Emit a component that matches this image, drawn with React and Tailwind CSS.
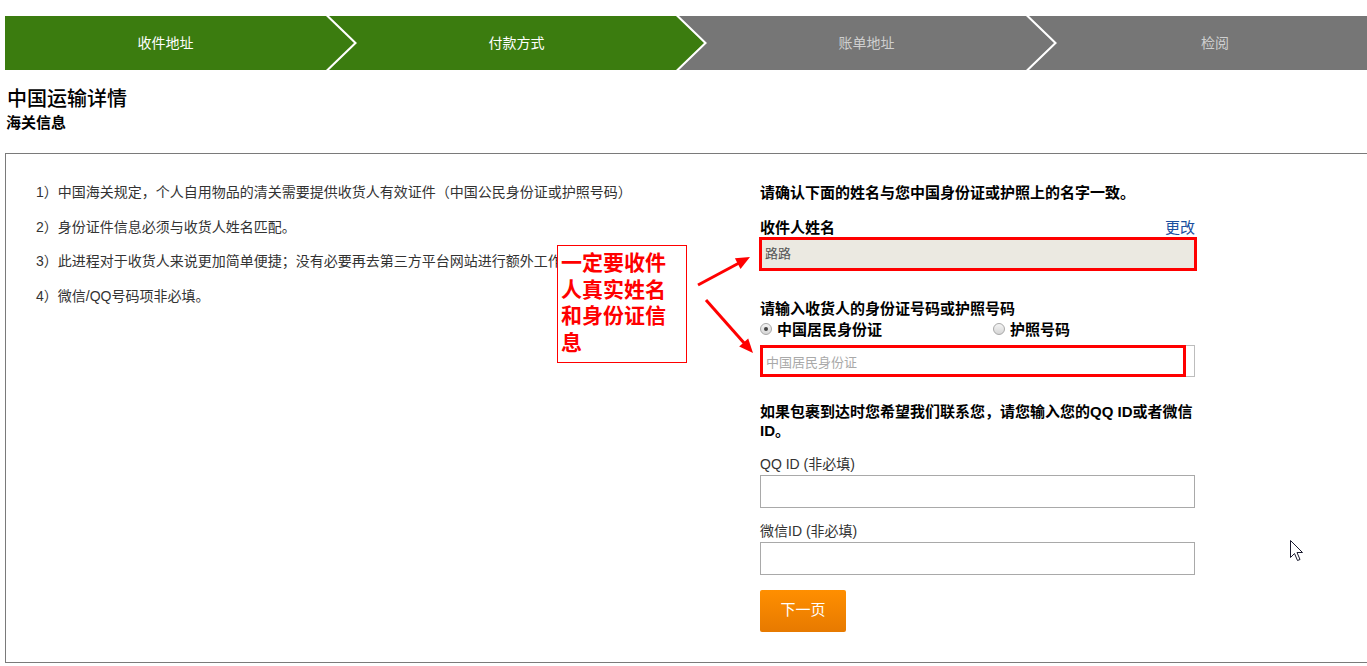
import React from "react";

const font = "font-['Liberation_Sans','Noto_Sans_CJK_SC',sans-serif]";

const steps = [
  { label: "收件地址", done: true },
  { label: "付款方式", done: true },
  { label: "账单地址", done: false },
  { label: "检阅", done: false },
];

const Stepper = () => (
  <div className="flex h-[54px] mt-[16px] -mr-[5px]">
    {steps.map((s, i) => {
      const first = i === 0;
      const last = i === steps.length - 1;
      const color = s.done ? "bg-[#3b7c0f] text-white" : "bg-[#767676] text-[#cfcfcf]";
      let shape = "";
      if (first) shape = "w-[349px] pr-[28px] [clip-path:polygon(0_0,calc(100%_-_28px)_0,100%_50%,calc(100%_-_28px)_100%,0_100%)]";
      else if (last) shape = "flex-1 -ml-[25px] pl-[34px] [clip-path:polygon(0_0,100%_0,100%_100%,0_100%,28px_50%)]";
      else shape = "w-[375px] -ml-[25px] px-[28px] [clip-path:polygon(0_0,calc(100%_-_28px)_0,100%_50%,calc(100%_-_28px)_100%,0_100%,28px_50%)]";
      return (
        <div key={s.label} className={`${color} ${shape} flex items-center justify-center text-[14px]`}>
          {s.label}
        </div>
      );
    })}
  </div>
);

const Radio = ({ checked, label }) => (
  <label className="flex items-center gap-[5px]">
    <span className="w-[12px] h-[12px] rounded-full border border-[#a8a8a8] bg-gradient-to-b from-[#f4f4f4] to-[#d6d6d6] flex items-center justify-center">
      {checked && <span className="w-[4px] h-[4px] rounded-full bg-[#444]" />}
    </span>
    <span className="font-bold text-[15px] text-black">{label}</span>
  </label>
);

export default function App() {
  return (
    <div className={`relative w-full h-[666px] overflow-hidden bg-white px-[5px] ${font}`}>
      <Stepper />

      <h1 className="ml-[2px] mt-[17px] text-[20px] leading-[24px] font-medium text-black">中国运输详情</h1>
      <h2 className="ml-[1px] mt-[3px] text-[15px] leading-[18px] font-bold text-black">海关信息</h2>

      {/* customs card */}
      <div className="mt-[21px] -mr-[5px] border-t border-b border-l border-[#7a7a7a] flex pt-[29px] pb-[30px]">
        <ul className="w-[754px] pl-[30px] flex flex-col gap-[15.5px] text-[14px] leading-[19px] text-[#333]">
          <li>1）中国海关规定，个人自用物品的清关需要提供收货人有效证件（中国公民身份证或护照号码）</li>
          <li>2）身份证件信息必须与收货人姓名匹配。</li>
          <li>3）此进程对于收货人来说更加简单便捷；没有必要再去第三方平台网站进行额外工作。</li>
          <li>4）微信/QQ号码项非必填。</li>
        </ul>

        <div className="w-[435px] flex flex-col">
          <p className="font-bold text-[15px] leading-[19px] text-black">请确认下面的姓名与您中国身份证或护照上的名字一致。</p>

          <div className="mt-[15.5px] flex items-end justify-between leading-[19px]">
            <span className="font-bold text-[15px] text-black">收件人姓名</span>
            <a className="text-[15px] text-[#1c4fa0]">更改</a>
          </div>
          <div className="-mx-[1px] h-[34px] w-[438px] border-[3px] border-[#ff0000] bg-[#ebe9e1] flex items-center px-[3px] text-[13px] text-[#555]">
            路路
          </div>

          <p className="mt-[28px] font-bold text-[15px] leading-[19px] text-black">请输入收货人的身份证号码或护照号码</p>
          <div className="mt-[2px] flex leading-[19px]">
            <div className="w-[233px]">
              <Radio checked label="中国居民身份证" />
            </div>
            <Radio label="护照号码" />
          </div>
          <div className="relative mt-[6px] h-[32px] border border-[#bdbdbd]">
            <div className="absolute -left-[1px] -top-[1px] right-[8px] -bottom-[1px] border-[3px] border-[#ff0000]" />
            <span className="absolute left-[5px] top-[7px] text-[13px] text-[#a9a9a9]">中国居民身份证</span>
          </div>

          <p className="mt-[25px] font-bold text-[15px] leading-[19px] text-black">
            如果包裹到达时您希望我们联系您，请您输入您的QQ ID或者微信
            <br />
            ID。
          </p>

          <label className="mt-[15px] text-[14px] leading-[19px] text-[#333]">QQ ID (非必填)</label>
          <div className="mt-[1px] h-[33px] border border-[#a9a9a9] bg-white" />

          <label className="mt-[14px] text-[14px] leading-[19px] text-[#333]">微信ID (非必填)</label>
          <div className="mt-[1px] h-[33px] border border-[#a9a9a9] bg-white" />

          <button className="mt-[15px] w-[86px] h-[42px] rounded-[2px] bg-gradient-to-b from-[#ff8f00] to-[#e77a00] text-white text-[15px]">
            下一页
          </button>
        </div>
      </div>

      {/* annotation */}
      <div className="absolute left-[557px] top-[245px] w-[130px] h-[118px] border border-[#ff0000] bg-white px-[3px] pt-[2px] text-[21px] leading-[26.5px] font-bold text-[#ff0000] font-['Noto_Sans_CJK_SC',serif]">
        一定要收件人真实姓名和身份证信息
      </div>

      <svg className="absolute left-0 top-0 pointer-events-none" width="1367" height="666">
        <line x1="698" y1="285" x2="740" y2="262.5" stroke="#ff0000" strokeWidth="3" />
        <polygon points="750,257 740.5,268.9 734.9,258.3" fill="#ff0000" />
        <line x1="706" y1="300" x2="745" y2="344" stroke="#ff0000" strokeWidth="3" />
        <polygon points="753,353 748.2,338.5 739.2,346.5" fill="#ff0000" />
        <path
          d="M1290.5 540.5 L1290.5 557.5 L1294.5 553.5 L1297.5 560.5 L1300 559.5 L1297 552.5 L1302.5 552.5 Z"
          fill="#fff"
          stroke="#1a1a2e"
          strokeWidth="1"
        />
      </svg>
    </div>
  );
}
